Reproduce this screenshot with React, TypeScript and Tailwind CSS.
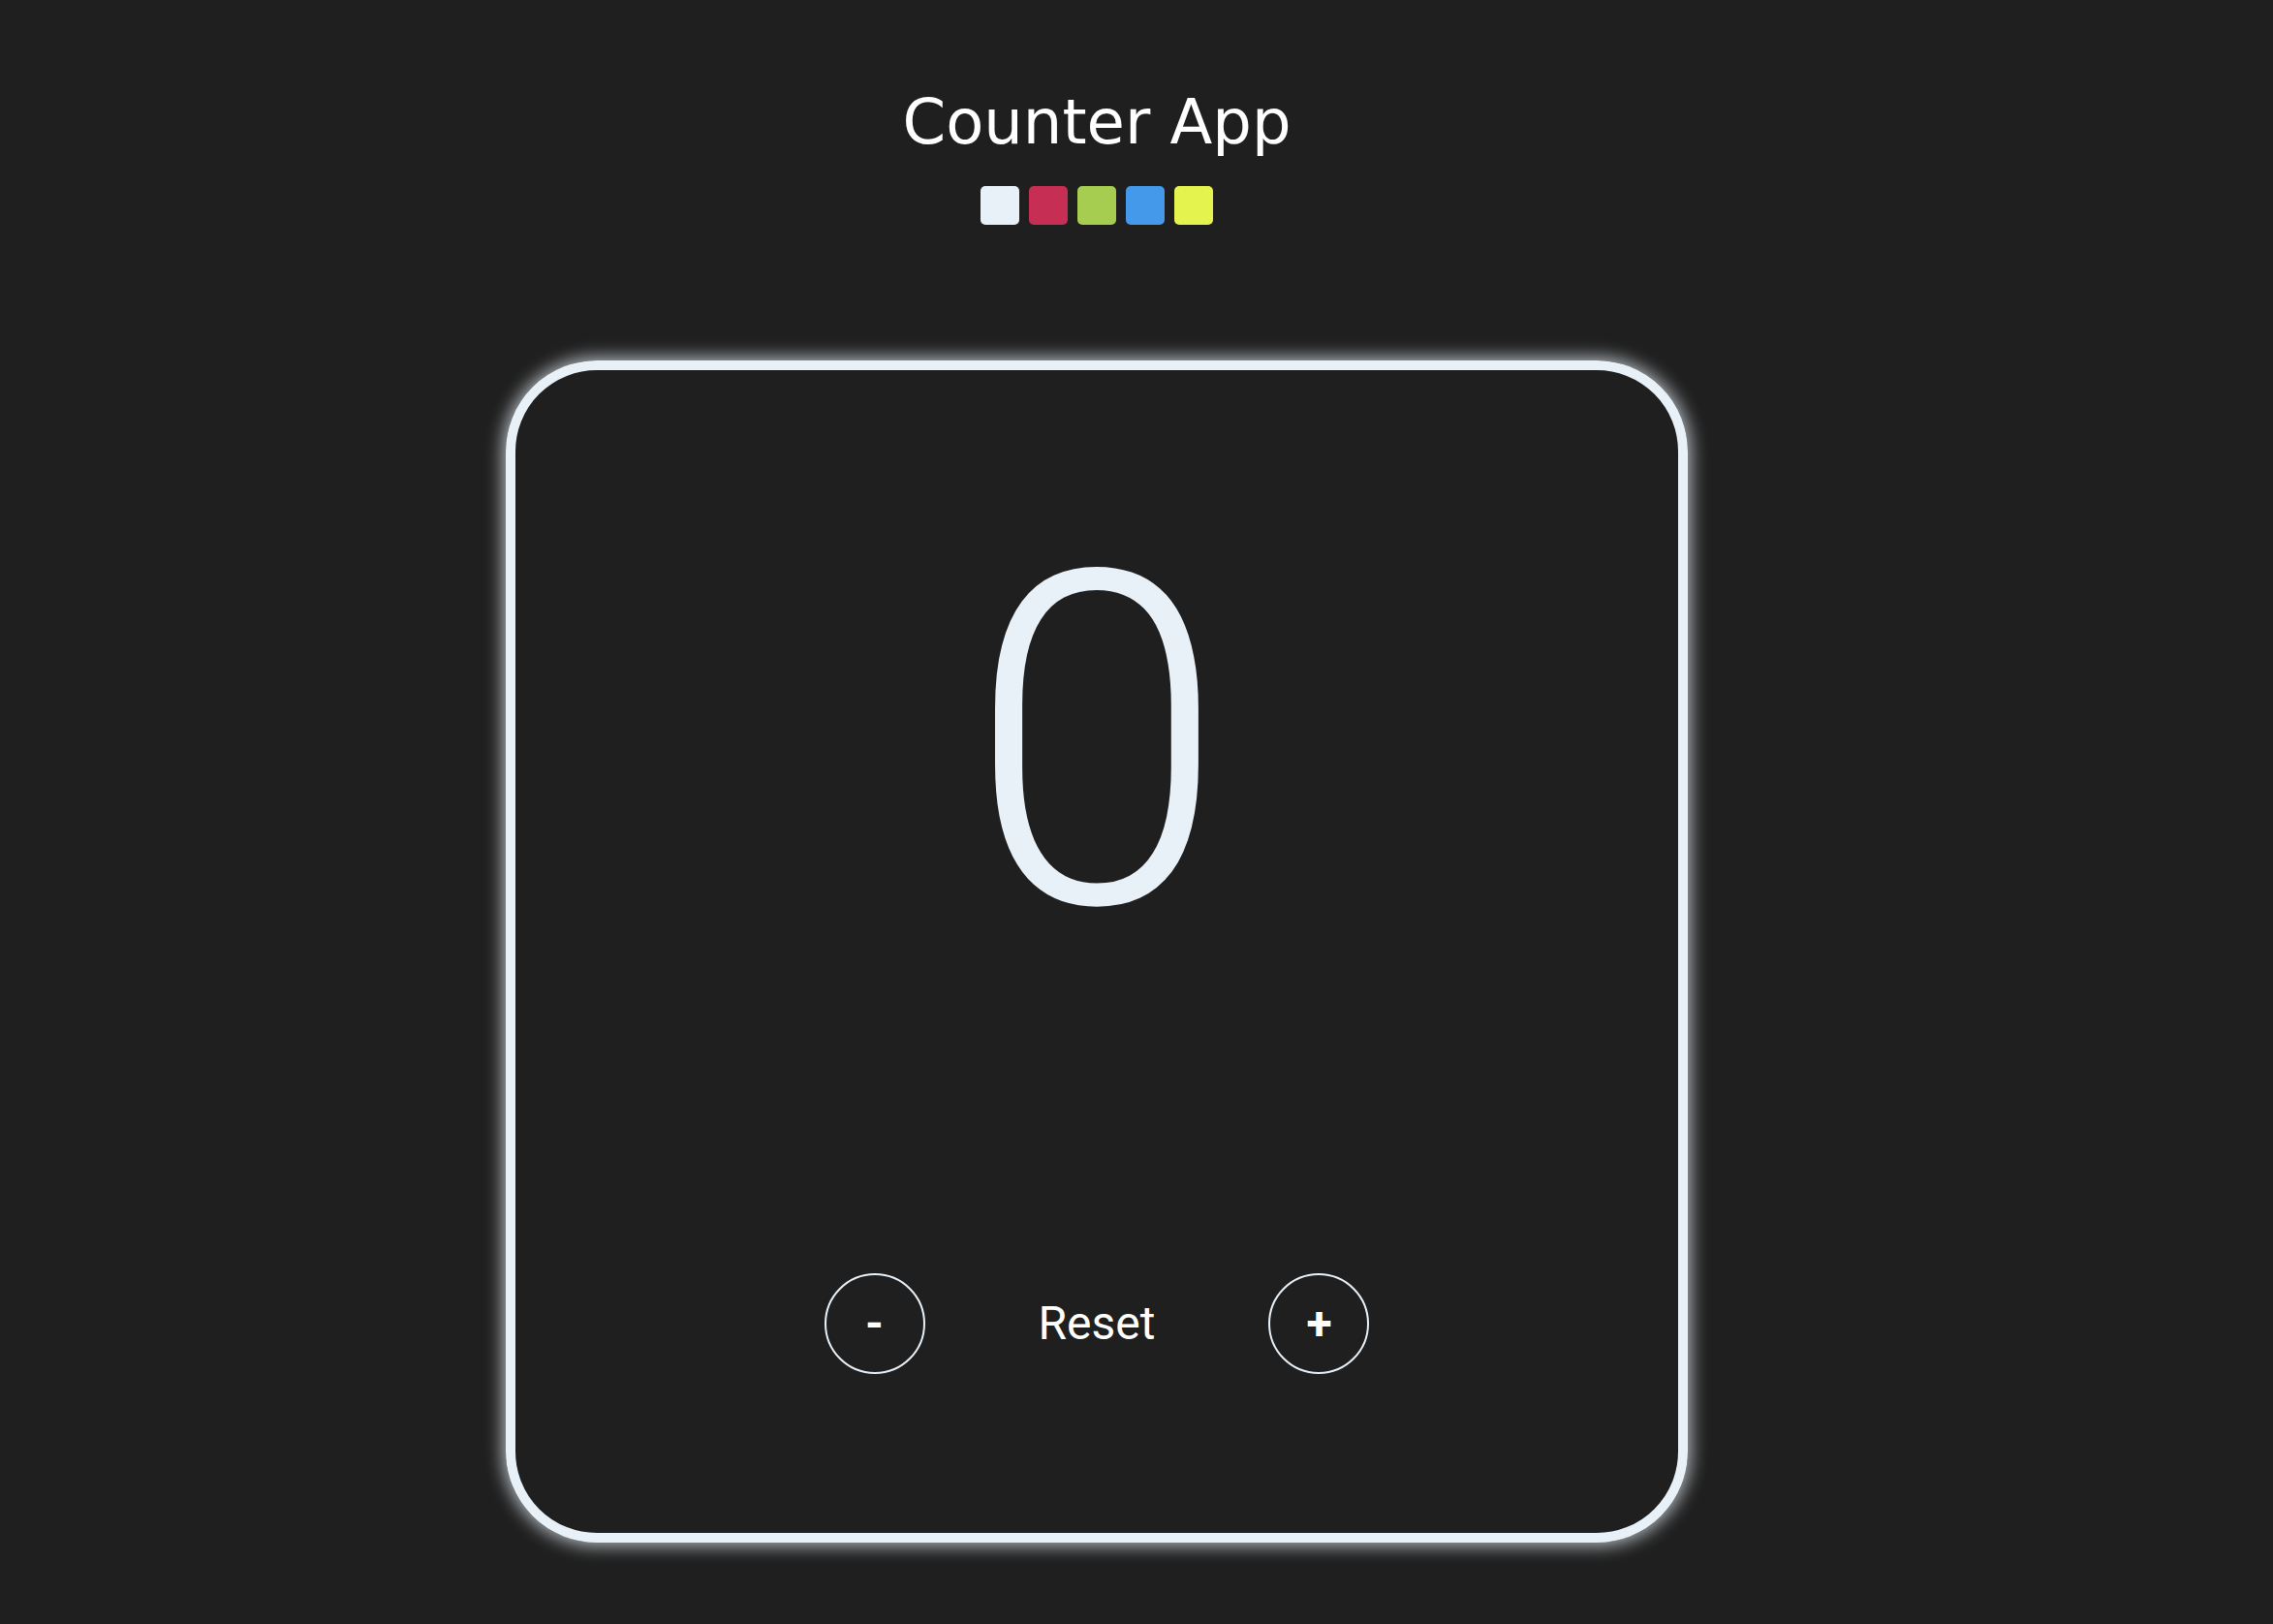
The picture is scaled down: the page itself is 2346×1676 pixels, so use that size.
import { useState } from 'react'

const swatches = ['#e8f1f8', '#c62e54', '#a6cd50', '#4599ea', '#e5f34f']

export default function App() {
  const [count, setCount] = useState(0)
  const [color, setColor] = useState(swatches[0])

  return (
    <div className="min-h-screen w-full bg-[#1f1f1f] flex flex-col items-center pr-[82px] pt-[94px]">
      <h1 className="font-['DejaVu_Sans',sans-serif] text-[64px] leading-none text-white">Counter App</h1>

      {/* selector de color */}
      <div className="mt-[34px] flex gap-[10px]">
        {swatches.map((c) => (
          <button
            key={c}
            type="button"
            onClick={() => setColor(c)}
            className="w-[40px] h-[40px] rounded-[5px]"
            style={{ backgroundColor: c }}
          />
        ))}
      </div>

      {/* tarjeta */}
      <div
        className="mt-[140px] w-[1220px] h-[1220px] rounded-[94px] border-[10px] flex flex-col items-center pt-[145px] shadow-[0_0_18px_3px_rgba(232,241,248,0.75)]"
        style={{ borderColor: color }}
      >
        <div
          className="h-[480px] font-['Roboto',sans-serif] font-light text-[480px] leading-none"
          style={{ color }}
        >
          {count}
        </div>

        <div className="mt-[307px] flex items-center gap-[117px] font-['Roboto',sans-serif] text-white">
          <button
            type="button"
            onClick={() => setCount((n) => n - 1)}
            className="w-[104px] h-[104px] rounded-full border-2 border-[#e8f1f8] flex items-center justify-center text-[48px] font-bold leading-none"
          >
            -
          </button>
          <button type="button" onClick={() => setCount(0)} className="text-[48px] leading-none">
            Reset
          </button>
          <button
            type="button"
            onClick={() => setCount((n) => n + 1)}
            className="w-[104px] h-[104px] rounded-full border-2 border-[#e8f1f8] flex items-center justify-center text-[48px] font-bold leading-none"
          >
            +
          </button>
        </div>
      </div>
    </div>
  )
}
